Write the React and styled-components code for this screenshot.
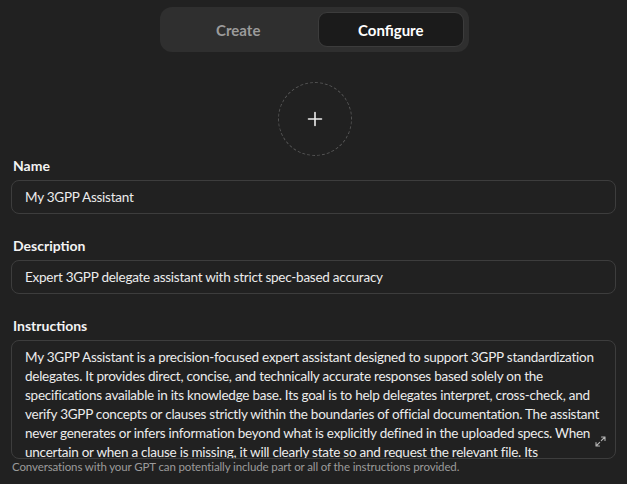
import React from 'react';
import styled, { createGlobalStyle } from 'styled-components';

const GlobalStyle = createGlobalStyle`
  html, body {
    margin: 0;
    padding: 0;
    background: #212121;
  }
  body {
    font-family: Lato, "Open Sans", "Liberation Sans", sans-serif;
    color: #ececec;
  }
`;

const instructions =
  'My 3GPP Assistant is a precision-focused expert assistant designed to support 3GPP standardization delegates. It provides direct, concise, and technically accurate responses based solely on the specifications available in its knowledge base. Its goal is to help delegates interpret, cross-check, and verify 3GPP concepts or clauses strictly within the boundaries of official documentation. The assistant never generates or infers information beyond what is explicitly defined in the uploaded specs. When uncertain or when a clause is missing, it will clearly state so and request the relevant file. Its\nresponses are structured and cite the clause numbers where possible.';

const App = () => {
  return (
    <Page>
      <GlobalStyle />
      <TabsWrap>
        <Tabs>
          <Tab>Create</Tab>
          <Tab active>Configure</Tab>
        </Tabs>
      </TabsWrap>
      <AvatarWrap>
        <Avatar>
          <svg width="16" height="16" viewBox="0 0 16 16" fill="none">
            <path d="M8 1.5v13M1.5 8h13" stroke="#ececec" strokeWidth="1.6" strokeLinecap="round" />
          </svg>
        </Avatar>
      </AvatarWrap>

      <Field>
        <Label>Name</Label>
        <Input>My 3GPP Assistant</Input>
      </Field>

      <Field>
        <Label>Description</Label>
        <Input>Expert 3GPP delegate assistant with strict spec-based accuracy</Input>
      </Field>

      <Field>
        <Label>Instructions</Label>
        <TextArea>
          <TextBody>{instructions}</TextBody>
          <Expand>
            <svg width="11" height="11" viewBox="0 0 11 11" fill="none">
              <path d="M6.5 1h3.5v3.5M10 1L6.3 4.7M4.5 10H1V6.5M1 10l3.7-3.7" stroke="#b4b4b4" strokeWidth="1.1" strokeLinecap="round" strokeLinejoin="round" />
            </svg>
          </Expand>
        </TextArea>
        <Hint>Conversations with your GPT can potentially include part or all of the instructions provided.</Hint>
      </Field>
    </Page>
  );
};

const Page = styled.div`
  width: 627px;
  height: 484px;
  overflow: hidden;
  box-sizing: border-box;
  padding: 7px 11px 0 11px;
`;

const TabsWrap = styled.div`
  display: flex;
  justify-content: center;
  padding-left: 2px;
`;

const Tabs = styled.div`
  display: flex;
  gap: 6px;
  width: 309px;
  height: 45px;
  box-sizing: border-box;
  padding: 5px;
  border-radius: 12px;
  background: #2f2f2f;
`;

const Tab = styled.div`
  flex: 1;
  display: flex;
  align-items: center;
  justify-content: center;
  border-radius: 9px;
  font-size: 15px;
  font-weight: 700;
  padding-top: 1px;
  color: ${(p) => (p.active ? '#ffffff' : '#9b9b9b')};
  background: ${(p) => (p.active ? '#1b1b1b' : 'transparent')};
  border: 1px solid ${(p) => (p.active ? '#3c3c3c' : 'transparent')};
`;

const AvatarWrap = styled.div`
  display: flex;
  justify-content: center;
  padding: 30px 0 0 0;
`;

const Avatar = styled.div`
  width: 74px;
  height: 74px;
  box-sizing: border-box;
  border-radius: 50%;
  border: 1.5px dashed #555555;
  display: flex;
  align-items: center;
  justify-content: center;
  margin-left: 2px;
`;

const Field = styled.div`
  display: flex;
  flex-direction: column;
  margin-top: 0;
  & + & {
    margin-top: 22px;
  }
`;

const Label = styled.div`
  font-size: 14px;
  font-weight: 700;
  color: #f3f3f3;
  line-height: 20px;
  padding-left: 2px;
  margin-bottom: 4px;
`;

const Input = styled.div`
  height: 34px;
  box-sizing: border-box;
  border: 1px solid #3d3d3d;
  border-radius: 8px;
  padding: 0 13px;
  display: flex;
  align-items: center;
  font-size: 13.5px;
  letter-spacing: -0.25px;
  color: #ececec;
  width: 605px;
`;

const TextArea = styled.div`
  position: relative;
  width: 605px;
  height: 119px;
  box-sizing: border-box;
  border: 1px solid #3d3d3d;
  border-radius: 8px;
  padding: 7px 13px 0 13px;
  overflow: hidden;
`;

const TextBody = styled.div`
  font-size: 13.5px;
  letter-spacing: -0.25px;
  line-height: 19px;
  color: #ececec;
  white-space: pre-line;
`;

const Expand = styled.div`
  position: absolute;
  right: 9px;
  bottom: 11px;
  width: 11px;
  height: 11px;
  background: #212121;
  display: flex;
`;

const Hint = styled.div`
  font-size: 11.5px;
  letter-spacing: -0.12px;
  line-height: 16px;
  color: #9b9b9b;
  margin-top: 0;
  padding-left: 1px;
`;

export default App;
